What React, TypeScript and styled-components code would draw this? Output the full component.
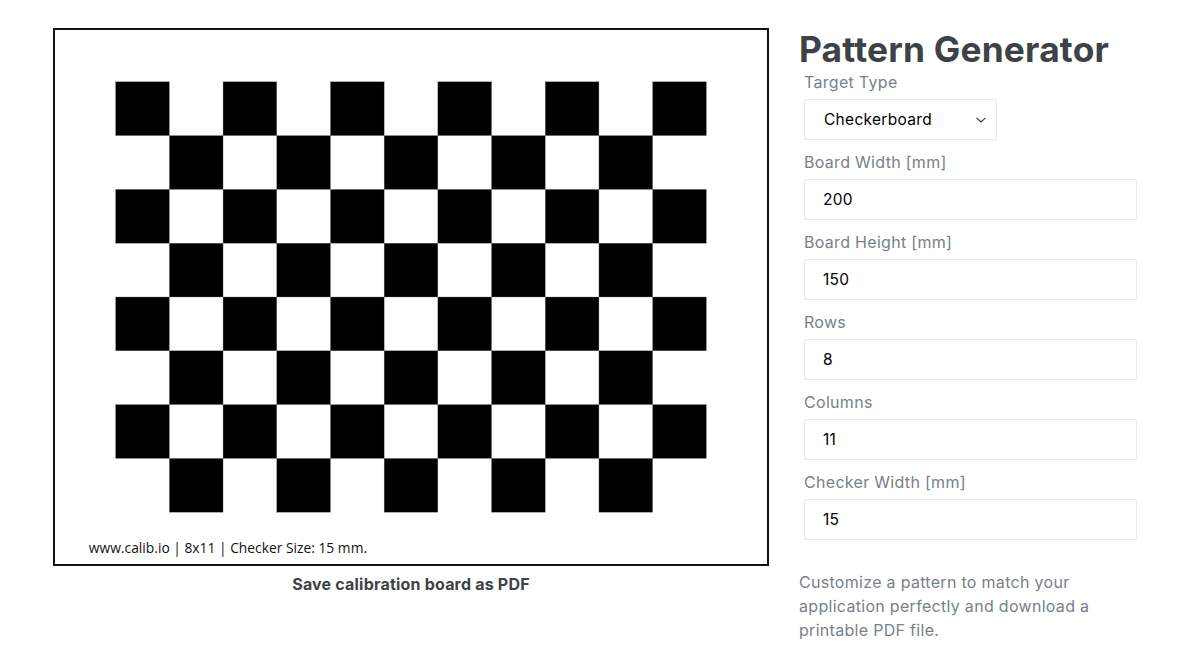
import styled, { createGlobalStyle } from "styled-components"

const GlobalStyle = createGlobalStyle`
    body {
        margin: 0;
        background: #fff;
        font-family: "Inter", "Liberation Sans", sans-serif;
    }
`

const ROWS = 8
const COLS = 11
// board in mm, drawn into the 716 x 537 frame
const BOARD_W = 200
const BOARD_H = 150
const CHECKER = 15

const fields = [
    { label: "Board Width [mm]", value: "200" },
    { label: "Board Height [mm]", value: "150" },
    { label: "Rows", value: "8" },
    { label: "Columns", value: "11" },
    { label: "Checker Width [mm]", value: "15" },
]

const Checkerboard = () => {
    const offX = (BOARD_W - COLS * CHECKER) / 2
    const offY = CHECKER
    const squares = []
    for (let r = 0; r < ROWS; r++) {
        for (let c = 0; c < COLS; c++) {
            if ((r + c) % 2 !== 0) continue
            squares.push(
                <rect
                    key={`${r}-${c}`}
                    x={offX + c * CHECKER}
                    y={offY + r * CHECKER}
                    width={CHECKER}
                    height={CHECKER}
                    fill="#000"
                    stroke="#777"
                    strokeWidth={0.1}
                />
            )
        }
    }
    return (
        <BoardSvg viewBox={`0 0 ${BOARD_W} ${BOARD_H}`} preserveAspectRatio="none">
            {squares}
            <text x={10} y={146.3} fontSize={3.86} fontFamily="'Open Sans', 'Liberation Sans', sans-serif" fill="#111">
                www.calib.io | 8x11 | Checker Size: 15 mm.
            </text>
        </BoardSvg>
    )
}

const Chevron = () => (
    <svg width="12" height="8" viewBox="0 0 12 8" fill="none">
        <path d="M1.5 1.8 L6 6 L10.5 1.8" stroke="#333" strokeWidth="1.1" />
    </svg>
)

export default function App() {
    return (
        <>
            <GlobalStyle />
            <Page>
                <Preview>
                    <Checkerboard />
                    <SaveLink>Save calibration board as PDF</SaveLink>
                </Preview>
                <Side>
                    <Title>Pattern Generator</Title>
                    <Form>
                        <Field>
                            <Label>Target Type</Label>
                            <Select>
                                <span>Checkerboard</span>
                                <Chevron />
                            </Select>
                        </Field>
                        {fields.map((f) => (
                            <Field key={f.label}>
                                <Label>{f.label}</Label>
                                <Input value={f.value} readOnly />
                            </Field>
                        ))}
                    </Form>
                    <Desc>
                        Customize a pattern to match your application perfectly and download a printable PDF file.
                    </Desc>
                </Side>
            </Page>
        </>
    )
}

const Page = styled.div`
    display: flex;
    gap: 30px;
    padding: 28px 0 0 53px;
    width: 1191px;
    height: 653px;
    box-sizing: border-box;
    overflow: hidden;
`

const Preview = styled.div`
    display: flex;
    flex-direction: column;
    align-items: center;
    width: 716px;
`

const BoardSvg = styled.svg`
    display: block;
    width: 716px;
    height: 538px;
    background: #fff;
    outline: 2px solid #111;
    outline-offset: -2px;
`

const SaveLink = styled.a`
    margin-top: 8px;
    font-size: 16px;
    font-weight: 700;
    color: #3d4246;
    letter-spacing: 0.2px;
    cursor: pointer;
`

const Side = styled.div`
    display: flex;
    flex-direction: column;
    width: 340px;
`

const Title = styled.h1`
    margin: 0;
    font-size: 35.3px;
    line-height: 44px;
    font-weight: 700;
    color: #3d4246;
    letter-spacing: 0.2px;
`

const Form = styled.div`
    display: flex;
    flex-direction: column;
    gap: 12px;
    padding-left: 5px;
`

const Field = styled.div`
    display: flex;
    flex-direction: column;
    gap: 6px;
`

const Label = styled.label`
    font-size: 16px;
    line-height: 21px;
    color: #788188;
    letter-spacing: 0.3px;
`

const Select = styled.div`
    display: flex;
    align-items: center;
    justify-content: space-between;
    width: 193px;
    height: 41px;
    box-sizing: border-box;
    padding: 0 9px 0 19px;
    border: 1px solid #e8e9eb;
    border-radius: 2px;
    font-size: 15.5px;
    color: #000;
    letter-spacing: 0.3px;
`

const Input = styled.input`
    width: 333px;
    height: 41px;
    box-sizing: border-box;
    padding: 0 18px;
    border: 1px solid #e8e9eb;
    border-radius: 2px;
    font-family: inherit;
    font-size: 15.5px;
    color: #000;
    outline: none;
    letter-spacing: 0.3px;
`

const Desc = styled.p`
    margin: 30px 0 0;
    font-size: 16px;
    line-height: 24px;
    color: #788188;
    letter-spacing: 0.3px;
`
